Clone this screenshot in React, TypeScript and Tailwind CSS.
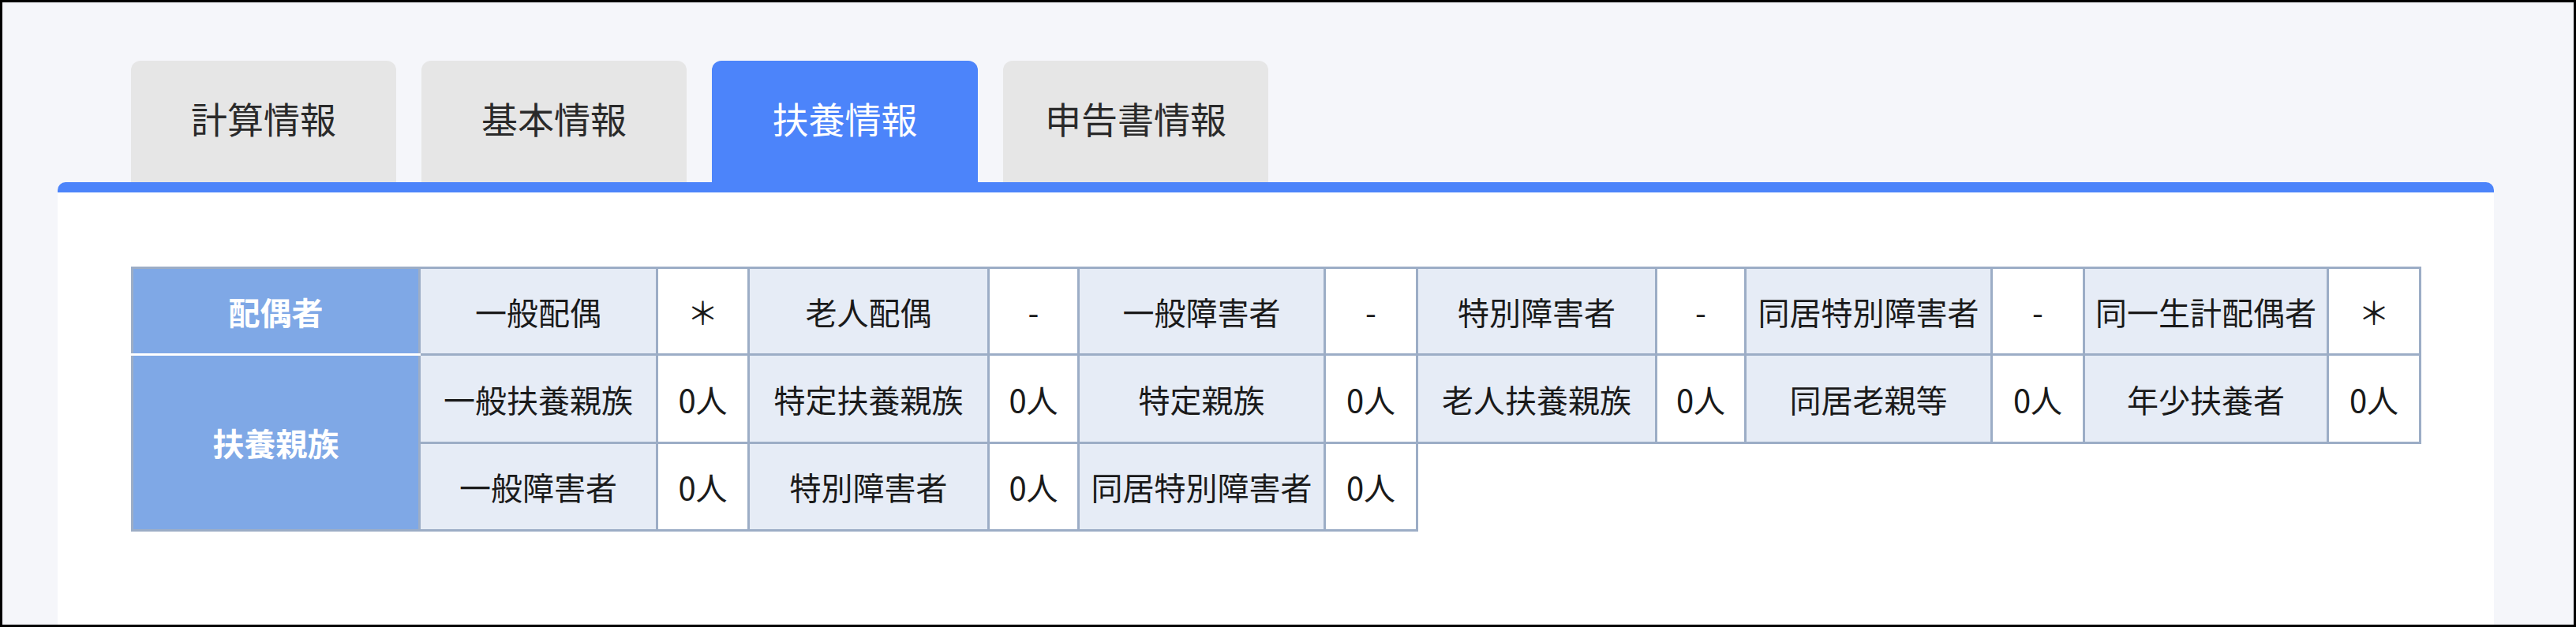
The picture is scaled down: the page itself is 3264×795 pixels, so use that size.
import React from 'react'

// ─── Data ─────────────────────────────────────────────────────────────────────
const tabs = ['計算情報', '基本情報', '扶養情報', '申告書情報']
const activeTab = 2

const colWidths = [
  'w-[364px]', 'w-[301px]', 'w-[116px]', 'w-[304px]', 'w-[114px]', 'w-[312px]', 'w-[117px]',
  'w-[303px]', 'w-[113px]', 'w-[312px]', 'w-[117px]', 'w-[309px]', 'w-[117px]',
]

const spouseRow: [string, string][] = [
  ['一般配偶', '＊'],
  ['老人配偶', '-'],
  ['一般障害者', '-'],
  ['特別障害者', '-'],
  ['同居特別障害者', '-'],
  ['同一生計配偶者', '＊'],
]

const dependentRow1: [string, string][] = [
  ['一般扶養親族', '0人'],
  ['特定扶養親族', '0人'],
  ['特定親族', '0人'],
  ['老人扶養親族', '0人'],
  ['同居老親等', '0人'],
  ['年少扶養者', '0人'],
]

const dependentRow2: [string, string][] = [
  ['一般障害者', '0人'],
  ['特別障害者', '0人'],
  ['同居特別障害者', '0人'],
]

// ─── Cells ────────────────────────────────────────────────────────────────────
function Pairs({ items }: { items: [string, string][] }) {
  return (
    <>
      {items.map(([label, value], i) => (
        <React.Fragment key={i}>
          <td className="border-[3px] border-[#9cadc6] bg-[#e6ecf6] px-2 text-center whitespace-nowrap">{label}</td>
          <td className="border-[3px] border-[#9cadc6] bg-white px-2 text-center whitespace-nowrap">{value}</td>
        </React.Fragment>
      ))}
    </>
  )
}

// ─── Page ─────────────────────────────────────────────────────────────────────
export default function App() {
  return (
    <div className="w-[3264px] h-[795px] box-border border-[3px] border-black bg-[#f5f6fa] flex flex-col pt-[74px] pl-[70px] pr-[101px] font-['Noto_Sans_CJK_JP','Noto_Sans',sans-serif] overflow-hidden">
      {/* Tabs */}
      <div className="flex gap-[32px] pl-[93px] shrink-0">
        {tabs.map((t, i) => (
          <div
            key={t}
            className={
              i === activeTab
                ? 'w-[337px] h-[154px] rounded-t-[12px] bg-[#4c84fa] text-white text-[46px] flex items-center justify-center pb-[10px]'
                : 'w-[336px] h-[154px] rounded-t-[12px] bg-[#e6e6e6] text-[#2a2a2a] text-[46px] flex items-center justify-center pb-[10px]'
            }
          >
            {t}
          </div>
        ))}
      </div>

      {/* Panel */}
      <div className="flex-1 bg-white border-t-[13px] border-[#4c84fa] rounded-t-[10px] pt-[94px] pl-[93px]">
        <table className="table-fixed border-collapse w-[2899px] text-[40px] text-[#1a1a1a]">
          <colgroup>
            {colWidths.map((w, i) => <col key={i} className={w} />)}
          </colgroup>
          <tbody>
            <tr className="h-[110px]">
              <td className="border-[3px] border-[#9cadc6] border-b-white bg-[#7fa8e6] text-white font-bold text-center">配偶者</td>
              <Pairs items={spouseRow} />
            </tr>
            <tr className="h-[112px]">
              <td rowSpan={2} className="border-[3px] border-[#9cadc6] border-t-white bg-[#7fa8e6] text-white font-bold text-center">扶養親族</td>
              <Pairs items={dependentRow1} />
            </tr>
            <tr className="h-[111px]">
              <Pairs items={dependentRow2} />
            </tr>
          </tbody>
        </table>
      </div>
    </div>
  )
}
